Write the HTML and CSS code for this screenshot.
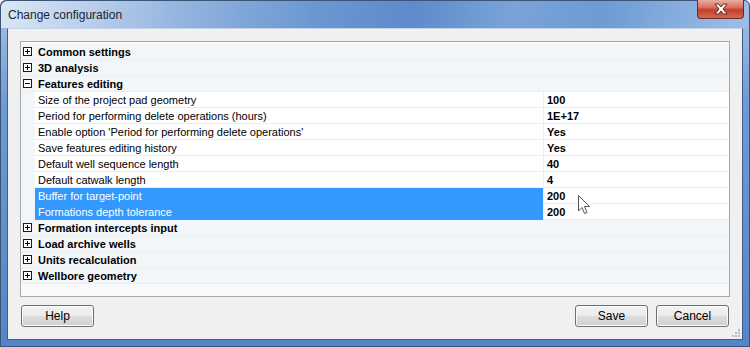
FILE: index.html
```html
<!DOCTYPE html>
<html lang="en">
<head>
  <meta charset="UTF-8">
  <title>Change configuration</title>
  <link rel="stylesheet" href="styles.css">
</head>
<body>
  <div class="window">
    <div class="titlebar">
      <span class="title">Change configuration</span>
      <div class="close">
        <svg width="16" height="12" viewBox="0 0 16 12">
          <path d="M2 1 L5.5 1 L8 4 L10.5 1 L14 1 L10 6 L14 11 L10.5 11 L8 8 L5.5 11 L2 11 L6 6 Z" fill="#fff" stroke="#5a2a22" stroke-width="1"/>
        </svg>
      </div>
    </div>

    <div class="client">
      <div class="grid">
        <div class="row cat"><span class="gutter"><i class="pm plus"></i></span><span class="name">Common settings</span></div>
        <div class="row cat"><span class="gutter"><i class="pm plus"></i></span><span class="name">3D analysis</span></div>
        <div class="row cat"><span class="gutter"><i class="pm"></i></span><span class="name">Features editing</span></div>
        <div class="row"><span class="gutter"></span><span class="name">Size of the project pad geometry</span><span class="value">100</span></div>
        <div class="row"><span class="gutter"></span><span class="name">Period for performing delete operations (hours)</span><span class="value">1E+17</span></div>
        <div class="row"><span class="gutter"></span><span class="name">Enable option 'Period for performing delete operations'</span><span class="value">Yes</span></div>
        <div class="row"><span class="gutter"></span><span class="name">Save features editing history</span><span class="value">Yes</span></div>
        <div class="row"><span class="gutter"></span><span class="name">Default well sequence length</span><span class="value">40</span></div>
        <div class="row"><span class="gutter"></span><span class="name">Default catwalk length</span><span class="value">4</span></div>
        <div class="row selected"><span class="gutter"></span><span class="name">Buffer for target-point</span><span class="value">200</span></div>
        <div class="row selected"><span class="gutter"></span><span class="name">Formations depth tolerance</span><span class="value">200</span></div>
        <div class="row cat"><span class="gutter"><i class="pm plus"></i></span><span class="name">Formation intercepts input</span></div>
        <div class="row cat"><span class="gutter"><i class="pm plus"></i></span><span class="name">Load archive wells</span></div>
        <div class="row cat"><span class="gutter"><i class="pm plus"></i></span><span class="name">Units recalculation</span></div>
        <div class="row cat"><span class="gutter"><i class="pm plus"></i></span><span class="name">Wellbore geometry</span></div>
      </div>

      <div class="buttons">
        <button class="btn">Help</button>
        <span class="spacer"></span>
        <button class="btn">Save</button>
        <button class="btn">Cancel</button>
      </div>

      <svg class="grip" width="10" height="10" viewBox="0 0 10 10">
        <rect x="7" y="1" width="2" height="2" fill="#b9bcc0"/>
        <rect x="4" y="4" width="2" height="2" fill="#b9bcc0"/>
        <rect x="7" y="4" width="2" height="2" fill="#b9bcc0"/>
        <rect x="1" y="7" width="2" height="2" fill="#b9bcc0"/>
        <rect x="4" y="7" width="2" height="2" fill="#b9bcc0"/>
        <rect x="7" y="7" width="2" height="2" fill="#b9bcc0"/>
      </svg>
    </div>

    <!-- mouse pointer over the grid -->
    <svg class="cursor" width="13" height="21" viewBox="0 0 13 21">
      <path d="M0.5 0.5 L0.5 16 L4 12.5 L6.5 18.5 L9 17.5 L6.5 11.5 L11.5 11.5 Z" fill="#fff" stroke="#555" stroke-width="1" stroke-linejoin="round"/>
    </svg>
  </div>
</body>
</html>
```

FILE: styles.css
```css
body {
  margin: 0;
  font-family: "Liberation Sans", Arial, sans-serif;
  font-size: 11px;
  color: #000;
}
.window {
  position: relative;
  width: 750px;
  height: 347px;
  box-sizing: border-box;
  padding: 0 7px 7px;
  display: flex;
  flex-direction: column;
  background: linear-gradient(to bottom, #a9c3e6 0%, #6f9ad3 30%, #5585c6 100%);
  border-radius: 6px 6px 0 0;
  box-shadow: inset 0 0 0 1px #3a5576;
  overflow: hidden;
}
.titlebar {
  height: 28px;
  display: flex;
  align-items: center;
  margin: 0 -7px;
  padding-left: 8px;
  padding-right: 6px;
  background: linear-gradient(100deg, #dbe7f5 0%, #b9cfec 12%, #8fb1de 26%, #6b97d1 42%, #5d8bcb 55%, #7aa3d8 68%, #6e9bd4 80%, #9ebfe7 100%);
  border-radius: 6px 6px 0 0;
  box-shadow: inset 1px 1px 0 #3a5576, inset -1px 0 0 #3a5576;
}
.title {
  font-size: 12px;
  color: #1b2434;
  flex: 1;
  padding-top: 2px;
}
.close {
  align-self: flex-start;
  width: 47px;
  height: 19px;
  box-sizing: border-box;
  display: flex;
  align-items: center;
  justify-content: center;
  background: linear-gradient(to bottom, #e9ada0 0%, #d9735e 40%, #c23f27 55%, #d26a52 100%);
  border: 1px solid #6d2a22;
  border-top: none;
  border-radius: 0 0 4px 4px;
}
.client {
  position: relative;
  flex: 1;
  display: flex;
  flex-direction: column;
  background: #f0f0f0;
  border: 1px solid #3d5d8c;
  border-top-color: #c7d6ea;
}
.grid {
  margin: 12px 12px 0;
  height: 256px;
  box-sizing: border-box;
  border: 1px solid #a8a8a8;
  background: #f7f9fb;
  padding-top: 2px;
}
.row {
  display: grid;
  grid-template-columns: 14px 508px 1fr;
  height: 16px;
  line-height: 16px;
  box-sizing: border-box;
  border-bottom: 1px solid #e9eef2;
  background: #fff;
  white-space: nowrap;
}
.row .gutter {
  background: #f2f6f9;
  display: flex;
  align-items: center;
  padding-left: 2px;
}
.row .name {
  padding-left: 3px;
  overflow: hidden;
}
.row .value {
  padding-left: 3px;
  font-weight: bold;
  border-left: 1px solid #eceff2;
}
.row.cat {
  background: #f2f6f9;
}
.row.cat .name {
  grid-column: 2 / 4;
  font-weight: bold;
}
.row.selected .name {
  background: #3399ff;
  color: #fff;
}
.pm {
  position: relative;
  width: 9px;
  height: 9px;
  box-sizing: border-box;
  border: 1px solid #1a1a1a;
  background: #fff;
}
.pm::before {
  content: "";
  position: absolute;
  left: 1px;
  top: 3px;
  width: 5px;
  height: 1px;
  background: #000;
}
.pm.plus::after {
  content: "";
  position: absolute;
  left: 3px;
  top: 1px;
  width: 1px;
  height: 5px;
  background: #000;
}
.buttons {
  display: flex;
  gap: 8px;
  margin: 8px 13px 0;
}
.spacer {
  flex: 1;
}
.btn {
  width: 73px;
  height: 22px;
  font-family: "Liberation Sans", Arial, sans-serif;
  font-size: 12px;
  color: #000;
  border: 1px solid #707070;
  border-radius: 3px;
  background: linear-gradient(to bottom, #f2f2f2 0%, #ebebeb 48%, #dddddd 52%, #cfcfcf 100%);
  box-shadow: inset 0 0 0 1px #fbfbfb;
  padding: 0;
}
.grip {
  position: absolute;
  right: 1px;
  bottom: 1px;
}
.cursor {
  position: absolute;
  left: 578px;
  top: 195px;
}
```
